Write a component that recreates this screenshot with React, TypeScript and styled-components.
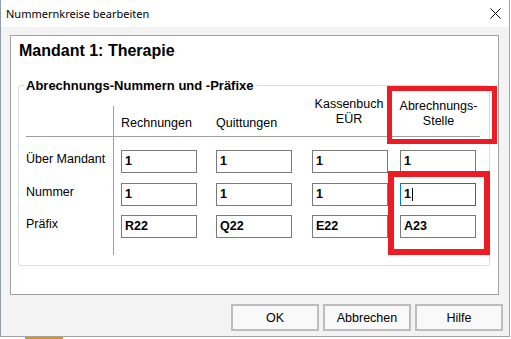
import React from "react";
import styled, { createGlobalStyle } from "styled-components";

const GlobalStyle = createGlobalStyle`
  html, body {
    margin: 0;
    height: 100%;
  }
  body {
    background: linear-gradient(#e39400, #e39400) 25px 337px / 38px 2px no-repeat, #ffffff;
    font-family: "Liberation Sans", Arial, sans-serif;
    color: #000;
  }
`;

const Window = styled.div`
  position: relative;
  width: 510px;
  height: 337px;
  box-sizing: border-box;
  border: 1px solid #a3a3a3;
  border-top: none;
  border-left-color: #8e9cab;
  display: flex;
  flex-direction: column;
  background: #f3f3f3;
`;

const TitleBar = styled.div`
  height: 27px;
  flex: none;
  display: flex;
  align-items: center;
  padding-left: 5px;
  background: #fff;
  font-family: "Noto Sans", sans-serif;
  font-size: 11px;
`;

const Caption = styled.span`
  flex: 1;
`;

const CloseButton = styled.div`
  width: 28px;
  height: 27px;
  display: flex;
  align-items: center;
  justify-content: center;
`;

const Body = styled.div`
  flex: 1;
  display: flex;
  flex-direction: column;
  padding: 8px 10px 0 9px;
`;

const Panel = styled.div`
  height: 260px;
  box-sizing: border-box;
  background: #fff;
  border: 1px solid #a0a0a0;
  padding: 5px 8px 0 7px;
`;

const PanelTitle = styled.div`
  margin: 0 0 18px 1px;
  font-weight: bold;
  font-size: 16px;
  line-height: 19px;
`;

const Group = styled.fieldset`
  margin: 0;
  min-width: 0;
  padding: 2px 8px 10px 7px;
  border: 1px solid #dcdcdc;
  border-radius: 3px;
`;

const GroupTitle = styled.legend`
  padding: 0 2px;
  margin-left: -2px;
  font-weight: bold;
  font-size: 13px;
  line-height: 15px;
`;

const Table = styled.div`
  display: grid;
  grid-template-columns: 87px 1px 95px 96px 88px 87px;
  grid-template-rows: 42px 36px 33px 32px 17px;
  font-size: 12.5px;
  line-height: 15px;
`;

const Divider = styled.div`
  grid-column: 2;
  grid-row: 1 / 6;
  margin-top: 11px;
  background: #a0a0a0;
`;

const HeadCell = styled.div<{ $pad: number; $center?: boolean; $indent?: number }>`
  grid-row: 1;
  display: flex;
  flex-direction: column;
  justify-content: flex-end;
  box-sizing: border-box;
  border-bottom: 1px solid #a0a0a0;
  padding: 0 0 ${(p) => p.$pad}px ${(p) => p.$indent ?? 7}px;
  text-align: ${(p) => (p.$center ? "center" : "left")};
  white-space: nowrap;
`;

const RowLabel = styled.div`
  grid-column: 1;
  display: flex;
  align-items: flex-end;
  padding-bottom: 6px;
  white-space: nowrap;
`;

const Cell = styled.div`
  display: flex;
  align-items: flex-end;
  padding-left: 7px;
`;

const Field = styled.div<{ $focused?: boolean }>`
  width: 76px;
  height: 23px;
  box-sizing: border-box;
  border: 1px solid ${(p) => (p.$focused ? "#0078d7" : "#7a7a7a")};
  background: #fff;
  padding-left: 3px;
  display: flex;
  align-items: center;
  font-weight: bold;
  font-size: 12.5px;
  line-height: 21px;
`;

const Caret = styled.span`
  width: 1px;
  height: 13px;
  margin-left: 1px;
  background: #000;
`;

const Footer = styled.div`
  display: flex;
  justify-content: flex-end;
  gap: 4px;
  margin: 9px -4px 0 0;
`;

const Button = styled.button`
  width: 88px;
  height: 27px;
  box-sizing: border-box;
  border: 2px solid #bdbdbd;
  background: #f9f9f9;
  padding: 0;
  font-family: "Liberation Sans", Arial, sans-serif;
  font-size: 12.5px;
  color: #000;
`;

const Marker = styled.div<{ $x: number; $y: number; $w: number; $h: number; $t: number }>`
  position: absolute;
  left: ${(p) => p.$x}px;
  top: ${(p) => p.$y}px;
  width: ${(p) => p.$w}px;
  height: ${(p) => p.$h}px;
  box-sizing: border-box;
  border: ${(p) => p.$t}px solid #ed1c24;
  pointer-events: none;
`;

const rows = [
  { label: "Über Mandant", values: ["1", "1", "1", "1"] },
  { label: "Nummer", values: ["1", "1", "1", "1"], focus: 3 },
  { label: "Präfix", values: ["R22", "Q22", "E22", "A23"] },
];

export default function App() {
  return (
    <>
      <GlobalStyle />
      <Window>
        <TitleBar>
          <Caption>Nummernkreise bearbeiten</Caption>
          <CloseButton>
            <svg width="11" height="11" viewBox="0 0 11 11">
              <path d="M0.5 0.5 L10.5 10.5 M10.5 0.5 L0.5 10.5" stroke="#000" strokeWidth="1" />
            </svg>
          </CloseButton>
        </TitleBar>
        <Body>
          <Panel>
            <PanelTitle>Mandant 1: Therapie</PanelTitle>
            <Group>
              <GroupTitle>Abrechnungs-Nummern und -Präfixe</GroupTitle>
              <Table>
                <HeadCell $pad={0} $indent={0} />
                <Divider />
                <HeadCell $pad={5}>Rechnungen</HeadCell>
                <HeadCell $pad={5}>Quittungen</HeadCell>
                <HeadCell $pad={9} $center $indent={0}>
                  <span>Kassenbuch</span>
                  <span>EÜR</span>
                </HeadCell>
                <HeadCell $pad={7} $center $indent={4}>
                  <span>Abrechnungs-</span>
                  <span>Stelle</span>
                </HeadCell>
                {rows.map((row) => (
                  <React.Fragment key={row.label}>
                    <RowLabel>{row.label}</RowLabel>
                    {row.values.map((v, i) => (
                      <Cell key={i}>
                        <Field $focused={row.focus === i}>
                          {v}
                          {row.focus === i && <Caret />}
                        </Field>
                      </Cell>
                    ))}
                  </React.Fragment>
                ))}
              </Table>
            </Group>
          </Panel>
          <Footer>
            <Button>OK</Button>
            <Button>Abbrechen</Button>
            <Button>Hilfe</Button>
          </Footer>
        </Body>
        <Marker $x={386} $y={86} $w={110} $h={58} $t={5} />
        <Marker $x={387} $y={171} $w={102} $h={84} $t={6} />
      </Window>
    </>
  );
}
